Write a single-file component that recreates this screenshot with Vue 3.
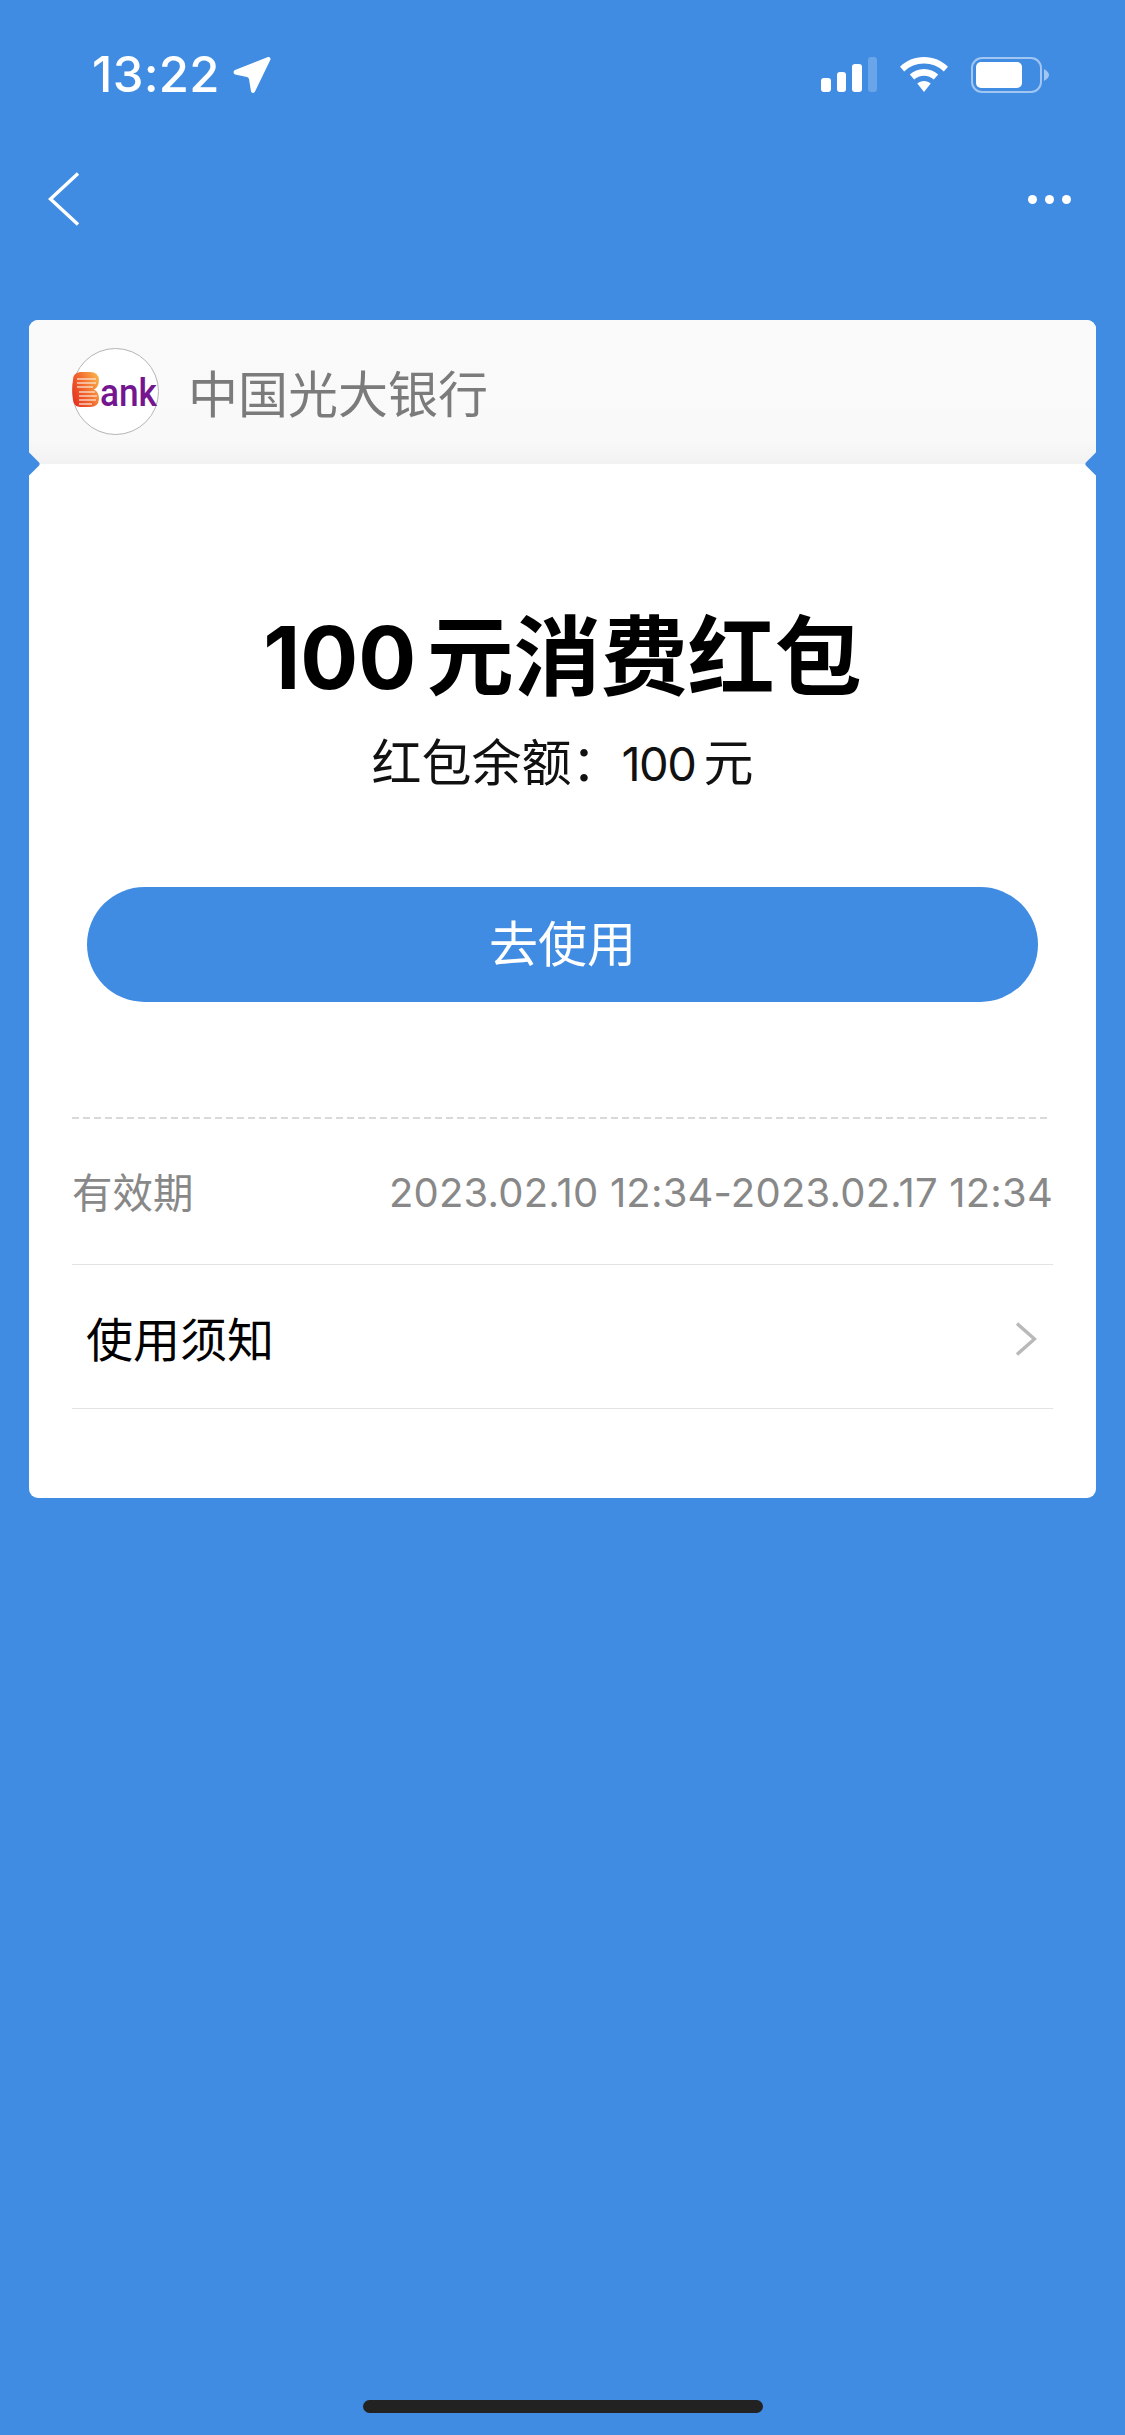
<template>
  <div class="page">
    <div class="status-bar">
      <div class="status-left">
        <span class="time">13:22</span>
        <svg class="arrow" width="38" height="38" viewBox="0 0 38 38">
          <path d="M35 1 L2 14 Q-1 16 2 18.5 L14 21 Q15.5 21.5 16 23 L18 35.5 Q20 38.5 22 35.5 L37.5 3.5 Q37.8 0.6 35 1 Z" fill="#fff" />
        </svg>
      </div>
      <div class="status-right">
        <div class="signal">
          <span class="bar bar-1"></span>
          <span class="bar bar-2"></span>
          <span class="bar bar-3"></span>
          <span class="bar bar-4"></span>
        </div>
        <svg class="wifi" width="48" height="35" viewBox="0 0 48 35">
          <path d="M24 0 C33.5 0 41.8 3.7 48 9.7 L43.8 14.5 C38.6 9.6 31.7 6.6 24 6.6 C16.3 6.6 9.4 9.6 4.2 14.5 L0 9.7 C6.2 3.7 14.5 0 24 0 Z" fill="#fff" />
          <path d="M24 12 C29.6 12 34.4 14.1 38.2 17.6 L33.8 22.6 C31.2 20.2 27.8 18.8 24 18.8 C20.2 18.8 16.8 20.2 14.2 22.6 L9.8 17.6 C13.6 14.1 18.4 12 24 12 Z" fill="#fff" />
          <path d="M24 24 C26.6 24 28.9 25 30.7 26.6 L24 35 L17.3 26.6 C19.1 25 21.4 24 24 24 Z" fill="#fff" />
        </svg>
        <div class="battery">
          <div class="battery-body"><div class="battery-level"></div></div>
          <svg class="battery-nub" width="5" height="12" viewBox="0 0 5 12">
            <path d="M0 0 Q5 3 5 6 Q5 9 0 12 Z" fill="rgba(255,255,255,0.5)" />
          </svg>
        </div>
      </div>
    </div>

    <div class="nav">
      <svg class="back" width="32" height="54" viewBox="0 0 32 54">
        <path d="M30 1.5 L2.5 27 L30 52.5" fill="none" stroke="#fff" stroke-width="3.4" />
      </svg>
      <div class="more">
        <span></span>
        <span></span>
        <span></span>
      </div>
    </div>

    <div class="card">
      <div class="card-head">
        <div class="logo">
          <svg width="90" height="90" viewBox="0 0 90 90">
            <defs>
              <linearGradient id="bankB" x1="0" y1="0.8" x2="1" y2="0.2">
                <stop offset="0" stop-color="#e5301f" />
                <stop offset="0.5" stop-color="#f26a2e" />
                <stop offset="1" stop-color="#f9b04a" />
              </linearGradient>
            </defs>
            <path d="M1 33 Q1 26 8 25 L18 25 Q26.5 25 27 33 Q27 40 22 42.5 Q27 45 27 52 Q26.5 60 18 60 L8 60 Q1 59 1 52 Q-0.5 42.5 1 33 Z" fill="url(#bankB)" />
            <path d="M5 32 H24 M5 36 H24 M5 40 H21 M7 45 H23 M7 49 H25 M7 53 H24 M7 57 H20" stroke="#fbe3d8" stroke-width="1.7" opacity="0.85" />
            <text class="logo-text" x="28" y="59" textLength="57" lengthAdjust="spacingAndGlyphs">ank</text>
          </svg>
        </div>
        <span class="bank-name">中国光大银行</span>
      </div>

      <div class="card-body">
        <div class="title"><span class="title-num">100</span> 元消费红包</div>
        <div class="balance">红包余额：<span class="balance-num">100</span> 元</div>
        <div class="use-btn">去使用</div>
        <div class="dash"></div>

        <div class="row row-date">
          <span class="label">有效期</span>
          <span class="value">2023.02.10 12:34-2023.02.17 12:34</span>
        </div>
        <div class="row row-notice">
          <span class="notice">使用须知</span>
          <svg width="22" height="34" viewBox="0 0 22 34">
            <path d="M2 1.5 L19.5 17 L2 32.5" fill="none" stroke="#b9b9b9" stroke-width="3.4" />
          </svg>
        </div>
      </div>
    </div>

    <div class="home-bar"></div>
  </div>
</template>

<script setup>
</script>

<style>
html,
body {
  margin: 0;
  background: #418ce3;
}
</style>

<style scoped>
.page {
  display: flex;
  flex-direction: column;
  height: 2435px;
  background: #418ce3;
  font-family: "Inter", "Noto Sans CJK SC", sans-serif;
}

.status-bar {
  display: flex;
  justify-content: space-between;
  align-items: center;
  height: 37px;
  margin-top: 56px;
  padding: 0 76px 0 92px;
}
.status-left {
  display: flex;
  align-items: center;
  gap: 13px;
}
.time {
  color: #fff;
  font-size: 49px;
  font-weight: 500;
  line-height: 37px;
  letter-spacing: 0.3px;
}
.status-right {
  display: flex;
  align-items: center;
}
.signal {
  display: flex;
  align-items: flex-end;
  gap: 6px;
  height: 35px;
  margin-right: 23px;
}
.bar {
  width: 9.5px;
  border-radius: 3px;
  background: #fff;
}
.bar-1 {
  height: 14px;
}
.bar-2 {
  height: 20px;
}
.bar-3 {
  height: 28px;
}
.bar-4 {
  height: 35px;
  background: rgba(255, 255, 255, 0.22);
}
.wifi {
  margin-right: 23px;
}
.battery {
  display: flex;
  align-items: center;
}
.battery-body {
  box-sizing: border-box;
  width: 71px;
  height: 36px;
  padding: 3px;
  border: 2.5px solid rgba(255, 255, 255, 0.5);
  border-radius: 11px;
}
.battery-level {
  width: 46px;
  height: 100%;
  border-radius: 5px;
  background: #fff;
}
.battery-nub {
  margin-left: 2px;
}

.nav {
  display: flex;
  justify-content: space-between;
  align-items: center;
  height: 54px;
  margin-top: 79px;
  padding: 0 54px 0 48px;
}
.more {
  display: flex;
  gap: 8px;
}
.more span {
  width: 9px;
  height: 9px;
  border-radius: 50%;
  background: #fff;
}

.card {
  margin: 94px 29px 0;
  border-radius: 9px;
  background: #fff;
  overflow: hidden;
  position: relative;
}
.card::before,
.card::after {
  content: "";
  position: absolute;
  top: 135px;
  width: 18px;
  height: 18px;
  border-radius: 3px;
  background: #418ce3;
  transform: rotate(45deg);
}
.card::before {
  left: -10px;
}
.card::after {
  right: -10px;
}

.card-head {
  display: flex;
  align-items: center;
  box-sizing: border-box;
  height: 144px;
  padding-left: 43px;
  background: linear-gradient(#fafafa 0%, #f9f9f9 82%, #f2f2f2 100%);
}
.logo {
  box-sizing: border-box;
  flex: none;
  width: 87px;
  height: 87px;
  border: 1px solid #b5b5b5;
  border-radius: 50%;
  background: #fff;
  margin-top: -2px;
}
.logo svg {
  display: block;
  margin: -2px 0 0 -1px;
}
.logo-text {
  font-family: "Roboto", sans-serif;
  font-size: 38px;
  font-weight: 500;
  fill: #74168f;
}
.bank-name {
  margin-left: 29px;
  padding-top: 5px;
  color: #7b7b7b;
  font-size: 50px;
  line-height: 60px;
}

.card-body {
  display: flex;
  flex-direction: column;
  padding: 144px 43px 89px;
}
.title {
  height: 100px;
  color: #000;
  font-size: 87px;
  font-weight: 700;
  line-height: 100px;
  text-align: center;
  white-space: nowrap;
  word-spacing: -10px;
}
.title-num {
  font-size: 86px;
  letter-spacing: 0;
}
.balance {
  height: 60px;
  margin-top: 25px;
  color: #111;
  font-size: 50px;
  line-height: 60px;
  text-align: center;
  white-space: nowrap;
  word-spacing: -6px;
}
.balance-num {
  font-size: 47px;
  letter-spacing: -1.5px;
}
.use-btn {
  height: 115px;
  margin: 94px 15px 0;
  border-radius: 58px;
  background: #418ce3;
  color: #fff;
  font-size: 49px;
  line-height: 115px;
  text-align: center;
}
.dash {
  height: 2px;
  margin: 115px 6px 0 0;
  background: repeating-linear-gradient(90deg, #d9d9d9 0 7px, transparent 7px 11px);
}
.row {
  display: flex;
  justify-content: space-between;
  align-items: center;
  border-bottom: 1px solid #e3e3e3;
}
.row-date {
  height: 146px;
  box-sizing: border-box;
}
.row-notice {
  height: 144px;
  padding: 4px 16px 0 14px;
  box-sizing: border-box;
}
.label {
  color: #888;
  font-size: 40.5px;
  margin-top: -2px;
}
.value {
  color: #888;
  font-size: 40px;
  letter-spacing: 0.2px;
  white-space: nowrap;
  margin-top: 2px;
}
.notice {
  color: #000;
  font-size: 47px;
  margin-top: -4px;
}

.home-bar {
  width: 400px;
  height: 13px;
  margin: auto auto 22px;
  border-radius: 7px;
  background: #222;
}
</style>
